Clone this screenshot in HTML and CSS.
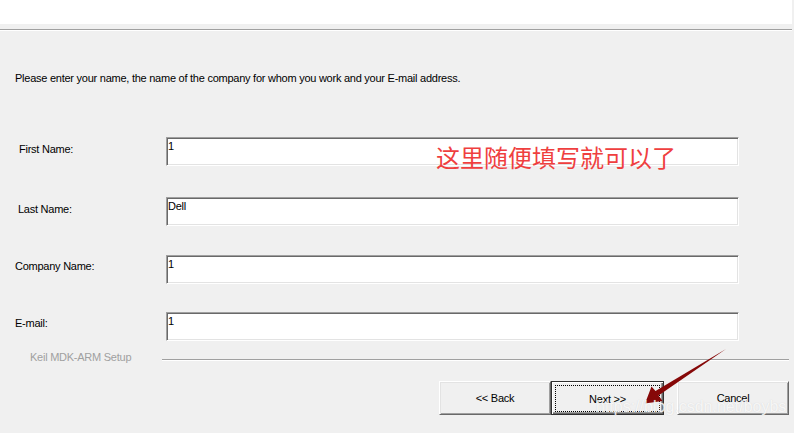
FILE: index.html
```html
<!DOCTYPE html>
<html>
<head>
<meta charset="utf-8">
<link rel="stylesheet" href="styles.css">
</head>
<body>
<div class="page">
  <div class="header"></div>
  <div class="sep"></div>
  <p class="intro">Please enter your name, the name of the company for whom you work and your E-mail address.</p>
  <div class="form">
    <div class="row">
      <span class="lbl lbl-first">First Name:</span>
      <div class="field">1</div>
    </div>
    <div class="row row-last">
      <span class="lbl lbl-last">Last Name:</span>
      <div class="field">Dell</div>
    </div>
    <div class="row row-company">
      <span class="lbl lbl-low">Company Name:</span>
      <div class="field">1</div>
    </div>
    <div class="row row-email">
      <span class="lbl lbl-low">E-mail:</span>
      <div class="field">1</div>
    </div>
  </div>
  <div class="brand">
    <span class="brand-name">Keil MDK-ARM Setup</span>
    <span class="brand-line"></span>
  </div>
  <div class="buttons">
    <div class="btn">&lt;&lt; Back</div>
    <div class="btn btn-default"><span class="focus">Next &gt;&gt;</span></div>
    <div class="btn btn-cancel">Cancel</div>
  </div>
  <div class="note">这里随便填写就可以了</div>
  <svg class="arrow" width="90" height="65" viewBox="0 0 90 65">
    <polygon points="86,4 18.5,50.5 22.5,56 5,58.5 11.5,41.5 15.5,46" fill="#860808"/>
  </svg>
  <div class="watermark">https://blog.csdn.net/boybs</div>
</div>
</body>
</html>
```

FILE: styles.css
```css
html, body {
  margin: 0;
  padding: 0;
  background: #f0f0f0;
}

.page {
  position: relative;
  width: 794px;
  height: 433px;
  overflow: hidden;
  background: #f0f0f0;
  font-family: "Liberation Sans", Arial, sans-serif;
  font-size: 11px;
  line-height: 13px;
  letter-spacing: -0.25px;
  color: #000;
}

.header {
  width: 792px;
  height: 24px;
  background: #fff;
}

.sep {
  width: 792px;
  height: 1px;
  margin-top: 5px;
  background: #a0a0a0;
  border-bottom: 1px solid #fff;
}

.intro {
  margin: 41px 0 0 0;
  padding-left: 15px;
}

.form {
  display: flex;
  flex-direction: column;
  margin-top: 52px;
}

.row {
  display: flex;
  align-items: center;
  height: 29px;
}

.row-last { margin-top: 31px; }
.row-company { margin-top: 29px; }
.row-email { margin-top: 28px; }

.lbl {
  box-sizing: border-box;
  width: 166px;
  padding-left: 15px;
  padding-bottom: 5px;
}

.lbl-first { padding-left: 19px; }
.lbl-last { padding-left: 18px; }
.lbl-low { padding-bottom: 7px; }

.field {
  box-sizing: border-box;
  width: 573px;
  height: 29px;
  background: #fff;
  border: 1px solid;
  border-color: #a0a0a0 #fff #fff #a0a0a0;
  box-shadow: inset 1px 1px #696969, inset -1px -1px #e3e3e3;
  padding: 2px 1px;
}

.brand {
  display: flex;
  align-items: center;
  margin-top: 10px;
  padding-right: 5px;
}

.brand-name {
  box-sizing: border-box;
  width: 162px;
  padding-left: 30px;
  white-space: nowrap;
  color: #a0a0a0;
}

.brand-line {
  flex: 1;
  height: 1px;
  margin-top: 5px;
  background: #a0a0a0;
  border-bottom: 1px solid #fff;
}

.buttons {
  display: flex;
  justify-content: flex-end;
  margin-top: 17px;
  padding-right: 5px;
}

.btn {
  box-sizing: border-box;
  width: 112px;
  height: 34px;
  display: flex;
  align-items: center;
  justify-content: center;
  background: #f0f0f0;
  border: 1px solid;
  border-color: #fff #696969 #696969 #fff;
  box-shadow: inset 1px 1px #e3e3e3, inset -1px -1px #a0a0a0;
  padding-top: 1px;
}

.btn-default {
  width: 113px;
  border: 1px solid #303030;
  box-shadow: inset 1px 1px #fff, inset -1px -1px #696969, inset -2px -2px #a0a0a0;
  padding: 3px 3px 2px 3px;
  align-items: stretch;
}

.focus {
  flex: 1;
  display: flex;
  align-items: center;
  justify-content: center;
  border: 1px dotted #000;
  padding-top: 1px;
}

.btn-cancel {
  margin-left: 13px;
}

.note {
  position: absolute;
  left: 436px;
  top: 145px;
  font-family: "Noto Sans CJK SC", sans-serif;
  font-size: 24px;
  line-height: 24px;
  letter-spacing: 0;
  color: #ef3f3f;
}

.arrow {
  position: absolute;
  left: 640px;
  top: 345px;
}

.watermark {
  position: absolute;
  left: 596px;
  top: 398px;
  font-size: 16px;
  line-height: 18px;
  letter-spacing: 0;
  color: rgba(255, 255, 255, 0.8);
  text-shadow: 0 0 1px rgba(190, 190, 190, 0.6);
}
```
